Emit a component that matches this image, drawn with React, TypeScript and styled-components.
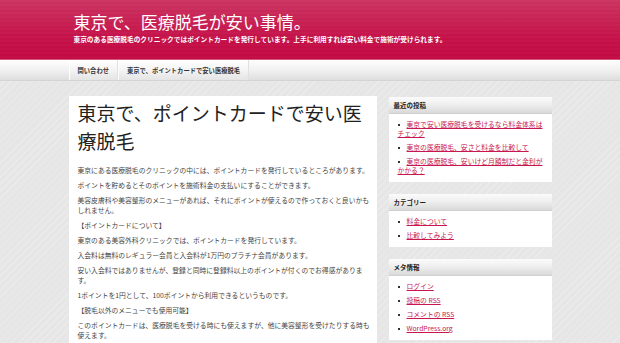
import React from 'react';
import styled, { createGlobalStyle } from 'styled-components';

const GlobalStyle = createGlobalStyle`
  html, body {
    margin: 0;
    padding: 0;
    height: 100%;
    overflow: hidden;
  }
  body {
    font-family: "Noto Sans CJK JP", "Liberation Sans", sans-serif;
    background-color: #e6e6e6;
    background-image: repeating-linear-gradient(
      135deg,
      rgba(255, 255, 255, 0.22) 0px,
      rgba(255, 255, 255, 0.22) 1px,
      rgba(0, 0, 0, 0) 1px,
      rgba(0, 0, 0, 0) 5px
    );
  }
`;

const Header = styled.header`
  height: 59px;
  border-bottom: 1px solid #d65a80;
  background: repeating-linear-gradient(
      180deg,
      rgba(255, 255, 255, 0.025) 0px,
      rgba(255, 255, 255, 0.025) 2px,
      rgba(255, 255, 255, 0) 2px,
      rgba(255, 255, 255, 0) 4px
    ),
    linear-gradient(#cb3360, #c40f47 70%, #c20a43);
`;

const Inner = styled.div`
  width: 483px;
  margin: 0 auto;
`;

const Branding = styled(Inner)`
  padding: 12px 0 0 5px;
  box-sizing: border-box;
  color: #fff;
`;

const SiteTitle = styled.div`
  font-size: 17px;
  line-height: 20px;
`;

const SiteDesc = styled.div`
  margin-top: 3px;
  font-size: 6.7px;
  line-height: 8px;
  font-weight: bold;
  white-space: nowrap;
`;

const NavBar = styled.nav`
  height: 20px;
  background: linear-gradient(#fdfdfd, #f1f1f1 50%, #dedede);
  border-bottom: 1px solid #d4d4d4;
`;

const NavList = styled(Inner)`
  display: flex;
  height: 100%;
`;

const NavItem = styled.div`
  display: flex;
  align-items: center;
  padding: 0 8px;
  font-size: 6.3px;
  font-weight: bold;
  color: #333;
  border-left: 1px solid rgba(255, 255, 255, 0.9);
  border-right: 1px solid #e0e0e0;
  background: linear-gradient(#ffffff, #f4f4f4 50%, #e4e4e4);
  white-space: nowrap;
`;

const Content = styled(Inner)`
  display: flex;
  align-items: flex-start;
  gap: 12px;
  padding-top: 15px;
`;

const Main = styled.article`
  width: 308px;
  box-sizing: border-box;
  padding: 3px 3px 20px 9px;
  background: #fff;
  color: #444;
`;

const PostTitle = styled.h1`
  margin: 0 0 10px;
  font-size: 19px;
  line-height: 28px;
  font-weight: normal;
  color: #222;
`;

const Para = styled.p`
  margin: 0 0 5px;
  font-size: 6.8px;
  line-height: 10px;
`;

const Sidebar = styled.aside`
  width: 163px;
  margin-top: 1px;
  display: flex;
  flex-direction: column;
  gap: 12px;
`;

const Widget = styled.section`
  background: #fff;
`;

const WidgetTitle = styled.h3`
  margin: 0;
  height: 17px;
  display: flex;
  align-items: center;
  padding-left: 5px;
  font-size: 6.5px;
  font-weight: bold;
  color: #222;
  background: linear-gradient(#fbfbfb, #eeeeee 50%, #d9d9d9);
  border-bottom: 1px solid #d0d0d0;
  box-sizing: border-box;
`;

const WidgetList = styled.ul`
  list-style: none;
  margin: 0;
  padding: 6px 6px 2px 9px;
`;

const WidgetItem = styled.li`
  margin-bottom: 5px;
  font-size: 6.8px;
  line-height: 9px;

  &::before {
    content: '';
    display: inline-block;
    width: 2px;
    height: 2px;
    background: #333;
    margin: 0 7px 0 0;
    vertical-align: middle;
  }
`;

const Link = styled.a`
  color: #c8174f;
  text-decoration: underline;
`;

const paragraphs = [
  '東京にある医療脱毛のクリニックの中には、ポイントカードを発行しているところがあります。',
  'ポイントを貯めるとそのポイントを施術料金の支払いにすることができます。',
  '美容皮膚科や美容整形のメニューがあれば、それにポイントが使えるので作っておくと良いかもしれません。',
  '【ポイントカードについて】',
  '東京のある美容外科クリニックでは、ポイントカードを発行しています。',
  '入会料は無料のレギュラー会員と入会料が1万円のプラチナ会員があります。',
  '安い入会料ではありませんが、登録と同時に登録料以上のポイントが付くのでお得感があります。',
  '1ポイントを1円として、100ポイントから利用できるというものです。',
  '【脱毛以外のメニューでも使用可能】',
  'このポイントカードは、医療脱毛を受ける時にも使えますが、他に美容整形を受けたりする時も使えます。',
];

const widgets = [
  {
    title: '最近の投稿',
    items: [
      '東京で安い医療脱毛を受けるなら料金体系はチェック',
      '東京の医療脱毛、安さと料金を比較して',
      '東京の医療脱毛、安いけど月額制だと金利がかかる？',
    ],
  },
  { title: 'カテゴリー', items: ['料金について', '比較してみよう'] },
  {
    title: 'メタ情報',
    items: ['ログイン', '投稿の RSS', 'コメントの RSS', 'WordPress.org'],
  },
];

const App: React.FC = () => {
  return (
    <>
      <GlobalStyle />
      <Header>
        <Branding>
          <SiteTitle>東京で、医療脱毛が安い事情。</SiteTitle>
          <SiteDesc>
            東京のある医療脱毛のクリニックではポイントカードを発行しています。上手に利用すれば安い料金で施術が受けられます。
          </SiteDesc>
        </Branding>
      </Header>
      <NavBar>
        <NavList>
          <NavItem>問い合わせ</NavItem>
          <NavItem>東京で、ポイントカードで安い医療脱毛</NavItem>
        </NavList>
      </NavBar>
      <Content>
        <Main>
          <PostTitle>東京で、ポイントカードで安い医療脱毛</PostTitle>
          {paragraphs.map((text, index) => (
            <Para key={index.toString()}>{text}</Para>
          ))}
        </Main>
        <Sidebar>
          {widgets.map((widget) => (
            <Widget key={widget.title}>
              <WidgetTitle>{widget.title}</WidgetTitle>
              <WidgetList>
                {widget.items.map((item) => (
                  <WidgetItem key={item}>
                    <Link href="#">{item}</Link>
                  </WidgetItem>
                ))}
              </WidgetList>
            </Widget>
          ))}
        </Sidebar>
      </Content>
    </>
  );
};

export default App;
